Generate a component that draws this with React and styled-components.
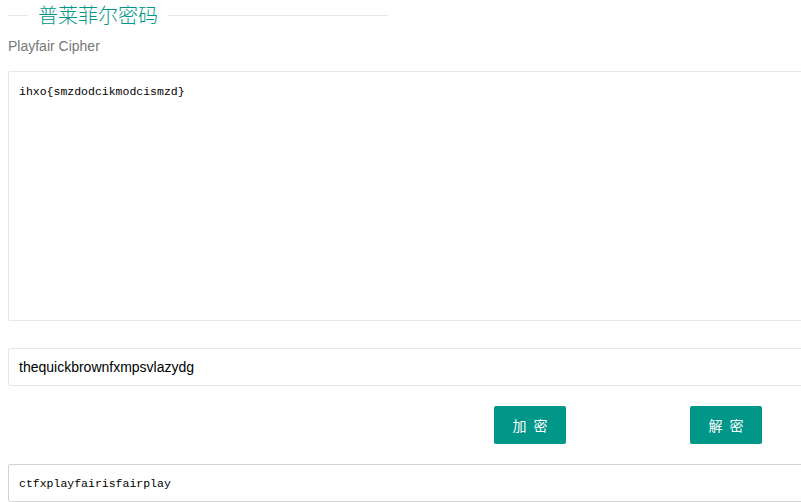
import React from "react";
import styled, { createGlobalStyle } from "styled-components";

const GlobalStyle = createGlobalStyle`
  html, body { margin: 0; padding: 0; overflow: hidden; background: #fff; }
  body { font-family: "Liberation Sans", Arial, "Noto Sans CJK SC", sans-serif; color: #333; }
`;

const Page = styled.div`
  padding: 0 8px;
  width: 1000px;
`;

const TitleRow = styled.div`
  display: flex;
  align-items: center;
  width: 380px;
  height: 30px;
`;

const Rule = styled.span`
  height: 1px;
  background: #e6e6e6;
  flex: ${(p) => (p.$grow ? "1" : "0 0 20px")};
`;

const Legend = styled.h2`
  margin: 0;
  padding: 0 10px;
  font-size: 20px;
  line-height: 30px;
  font-weight: 300;
  color: #009688;
  font-family: "Noto Sans CJK SC", sans-serif;
`;

const Subtitle = styled.div`
  margin-top: 6px;
  font-size: 14px;
  line-height: 20px;
  color: #777;
`;

const Area = styled.textarea`
  display: block;
  box-sizing: border-box;
  width: 100%;
  height: 250px;
  margin-top: 15px;
  padding: 10px;
  border: 1px solid #e6e6e6;
  border-radius: 2px;
  resize: none;
  outline: none;
  font-family: "Liberation Mono", monospace;
  font-size: 11.5px;
  line-height: 20px;
  color: #000;
  background: #fff;
`;

const TextInput = styled.input`
  display: block;
  box-sizing: border-box;
  width: 100%;
  height: 38px;
  margin-top: ${(p) => p.$top}px;
  padding: 0 10px;
  border: 1px solid ${(p) => p.$border || "#e6e6e6"};
  border-radius: 2px;
  outline: none;
  font-family: ${(p) => (p.$mono ? '"Liberation Mono", monospace' : '"Liberation Sans", Arial, sans-serif')};
  font-size: ${(p) => (p.$mono ? "11.5px" : "14px")};
  color: #000;
  background: #fff;
`;

const ButtonRow = styled.div`
  display: flex;
  gap: 124px;
  margin-top: 20px;
  padding-left: 486px;
`;

const Button = styled.button`
  width: 72px;
  height: 38px;
  border: none;
  border-radius: 2px;
  background: #009688;
  color: #fff;
  font-family: "Noto Sans CJK SC", sans-serif;
  font-size: 14px;
  letter-spacing: 2px;
  white-space: pre;
  padding: 0 0 0 2px;
  cursor: pointer;
`;

export default function App() {
  return (
    <>
      <GlobalStyle />
      <Page>
        <TitleRow>
          <Rule />
          <Legend>普莱菲尔密码</Legend>
          <Rule $grow />
        </TitleRow>
        <Subtitle>Playfair Cipher</Subtitle>
        <Area readOnly value="ihxo{smzdodcikmodcismzd}" />
        <TextInput $top={27} readOnly value="thequickbrownfxmpsvlazydg" />
        <ButtonRow>
          <Button>加 密</Button>
          <Button>解 密</Button>
        </ButtonRow>
        <TextInput $top={20} $mono $border="#d2d2d2" readOnly value="ctfxplayfairisfairplay" />
      </Page>
    </>
  );
}
